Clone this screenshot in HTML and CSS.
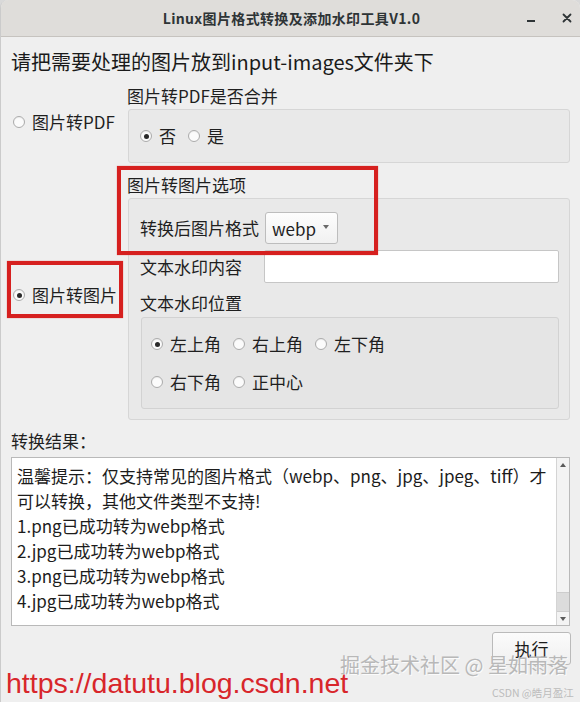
FILE: index.html
```html
<!DOCTYPE html>
<html lang="zh-CN">
<head>
<meta charset="utf-8">
<title>Linux图片格式转换及添加水印工具V1.0</title>
<link rel="stylesheet" href="styles.css">
</head>
<body>
<div class="window">
  <div class="titlebar">
    <div></div>
    <div class="title">Linux图片格式转换及添加水印工具V1.0</div>
    <div class="tb-controls">
      <svg class="tb-min" width="10" height="10" viewBox="0 0 10 10"><rect x="1" y="7" width="8" height="2" fill="#2e3436"/></svg>
      <svg class="tb-close" width="10" height="10" viewBox="0 0 10 10"><path d="M1.5 1.5 L8.5 8.5 M8.5 1.5 L1.5 8.5" stroke="#2e3436" stroke-width="1.8" stroke-linecap="round"/></svg>
    </div>
  </div>

  <div class="content">
    <h1 class="heading">请把需要处理的图片放到input-images文件夹下</h1>

    <div class="modes">
      <div class="mode">
        <label class="radio"><span class="dot"></span>图片转PDF</label>
      </div>
      <div class="section">
        <div class="section-title">图片转PDF是否合并</div>
        <div class="group group-pdf">
          <label class="radio checked"><span class="dot"></span>否</label>
          <label class="radio"><span class="dot"></span>是</label>
        </div>
      </div>

      <div class="mode">
        <label class="radio checked"><span class="dot"></span>图片转图片</label>
      </div>
      <div class="section">
        <div class="section-title">图片转图片选项</div>
        <div class="group group-img">
          <div class="field">
            <span class="field-label">转换后图片格式</span>
            <div class="combo"><span>webp</span><span class="combo-arrow"></span></div>
          </div>
          <div class="field field-gap">
            <span class="field-label">文本水印内容</span>
            <div class="text-input"></div>
          </div>
          <div class="subtitle">文本水印位置</div>
          <div class="group inner">
            <div class="pos-row">
              <label class="radio checked"><span class="dot"></span>左上角</label>
              <label class="radio"><span class="dot"></span>右上角</label>
              <label class="radio"><span class="dot"></span>左下角</label>
            </div>
            <div class="pos-row">
              <label class="radio"><span class="dot"></span>右下角</label>
              <label class="radio"><span class="dot"></span>正中心</label>
            </div>
          </div>
        </div>
      </div>
    </div>

    <div class="result-label">转换结果：</div>
    <div class="textarea">
      <div class="ta-text">
        <div class="ta-line">温馨提示：仅支持常见的图片格式（webp、png、jpg、jpeg、tiff）才</div>
        <div class="ta-line">可以转换，其他文件类型不支持!</div>
        <div class="ta-line">1.png已成功转为webp格式</div>
        <div class="ta-line">2.jpg已成功转为webp格式</div>
        <div class="ta-line">3.png已成功转为webp格式</div>
        <div class="ta-line">4.jpg已成功转为webp格式</div>
      </div>
      <div class="scrollbar">
        <div class="sb-btn"><span class="sb-up"></span></div>
        <div class="sb-track"><div class="sb-thumb"></div></div>
        <div class="sb-btn"><span class="sb-down"></span></div>
      </div>
    </div>
    <div class="actions">
      <button class="btn" type="button">执行</button>
    </div>
  </div>

  <div class="mark mark-options"></div>
  <div class="mark mark-mode"></div>
  <div class="wm-juejin">掘金技术社区 @ 星如雨落</div>
  <div class="wm-url">https://datutu.blog.csdn.net</div>
  <div class="wm-csdn">CSDN @皓月盈江</div>
</div>
</body>
</html>
```

FILE: styles.css
```css
* {
  box-sizing: border-box;
}

html,
body {
  margin: 0;
  padding: 0;
}

body {
  width: 580px;
  height: 702px;
  overflow: hidden;
  background: #d9d9d9;
  font-family: "Noto Sans CJK SC", "Noto Sans", sans-serif;
  color: #1f1f1f;
}

.window {
  position: relative;
  width: 580px;
  height: 702px;
  background: #efefef;
  border-left: 1px solid #cbcbcb;
  border-radius: 8px 8px 0 0;
  overflow: hidden;
}

/* title bar */
.titlebar {
  height: 37px;
  background: #dfddda;
  border-bottom: 1px solid #c6c3bf;
  display: grid;
  grid-template-columns: 1fr auto 1fr;
  align-items: center;
}

.title {
  font-weight: bold;
  font-size: 14px;
  letter-spacing: 0.35px;
  color: #2e3436;
  padding-left: 2px;
}

.tb-controls {
  display: flex;
  justify-content: flex-end;
  align-items: center;
  gap: 26px;
  padding-right: 8px;
}

/* content */
.content {
  padding: 12px 10px 0 10px;
}

.heading {
  margin: 0;
  font-size: 20px;
  line-height: 26px;
  font-weight: normal;
  color: #1a1a1a;
}

.modes {
  display: grid;
  grid-template-columns: 117px 1fr;
  row-gap: 11px;
  margin-top: 10px;
}

.mode {
  display: flex;
  align-items: center;
}

.radio {
  display: flex;
  align-items: center;
  gap: 7px;
  font-size: 17px;
  line-height: 22px;
  white-space: nowrap;
}

.mode .radio {
  padding-left: 2px;
  margin-top: -4px;
}

.dot {
  position: relative;
  width: 12px;
  height: 12px;
  border-radius: 50%;
  border: 1px solid #ababab;
  background: #fbfbfb;
  box-shadow: inset 0 1px 1px rgba(0, 0, 0, 0.06);
  flex: none;
}

.radio.checked .dot::after {
  content: "";
  position: absolute;
  left: 2.5px;
  top: 2.5px;
  width: 5px;
  height: 5px;
  border-radius: 50%;
  background: #2a2a2a;
}

.section-title {
  font-size: 17px;
  line-height: 22px;
  margin-bottom: 2px;
  margin-left: -1px;
}

.group {
  background: #e9e9e9;
  border: 1px solid #d6d6d6;
  border-radius: 3px;
}

.group-pdf {
  height: 54px;
  display: flex;
  align-items: center;
  gap: 12px;
  padding-left: 11px;
}

.group-img {
  display: flex;
  flex-direction: column;
  padding: 13px 10px 10px 11px;
}

.field {
  display: flex;
  align-items: center;
}

.field-gap {
  margin-top: 6px;
}

.field-label {
  width: 125px;
  flex: none;
  font-size: 17px;
  line-height: 22px;
}

.combo {
  width: 73px;
  height: 32px;
  border: 1px solid #bdbdbd;
  border-radius: 3px;
  background: linear-gradient(#fdfdfd, #f1f1f1);
  display: flex;
  align-items: center;
  justify-content: space-between;
  padding: 0 8px 0 6px;
  font-size: 17px;
}

.combo-arrow {
  width: 0;
  height: 0;
  border-left: 3.5px solid transparent;
  border-right: 3.5px solid transparent;
  border-top: 4px solid #6a6a6a;
  margin-top: -3px;
}

.text-input {
  flex: 1;
  height: 33px;
  background: #ffffff;
  border: 1px solid #c6c6c6;
  border-radius: 2px;
  margin-left: -1px;
}

.subtitle {
  margin-top: 9px;
  font-size: 17px;
  line-height: 22px;
}

.inner {
  margin-top: 3px;
  margin-left: 1px;
  background: #e5e5e5;
  border-color: #d2d2d2;
  padding: 15px 9px;
  display: flex;
  flex-direction: column;
  gap: 16px;
}

.pos-row {
  display: flex;
  gap: 12px;
}

/* result */
.result-label {
  margin-top: 10px;
  font-size: 17px;
  line-height: 22px;
}

.textarea {
  margin-top: 5px;
  height: 169px;
  background: #ffffff;
  border: 1px solid #b9b9b9;
  display: flex;
}

.ta-text {
  flex: 1;
  padding: 5px 0 0 5px;
  font-size: 17px;
  line-height: 25px;
  color: #1c1c1c;
  overflow: hidden;
}

.ta-line {
  white-space: nowrap;
}

.scrollbar {
  width: 13px;
  flex: none;
  display: flex;
  flex-direction: column;
  background: #f3f3f3;
  border-left: 1px solid #d4d4d4;
}

.sb-btn {
  height: 13px;
  display: flex;
  align-items: center;
  justify-content: center;
}

.sb-up {
  width: 0;
  height: 0;
  border-left: 3.5px solid transparent;
  border-right: 3.5px solid transparent;
  border-bottom: 4px solid #5a5a5a;
}

.sb-down {
  width: 0;
  height: 0;
  border-left: 3.5px solid transparent;
  border-right: 3.5px solid transparent;
  border-top: 4px solid #5a5a5a;
}

.sb-track {
  flex: 1;
  display: flex;
  flex-direction: column;
  justify-content: flex-end;
}

.sb-thumb {
  height: 20px;
  background: #dcdcdc;
  border-top: 1px solid #cdcdcd;
  border-bottom: 1px solid #cdcdcd;
}

.actions {
  display: flex;
  justify-content: flex-end;
  margin-top: 6px;
  margin-right: -1px;
}

.btn {
  width: 79px;
  height: 33px;
  border: 1px solid #bababa;
  border-radius: 3px;
  background: linear-gradient(#fbfbfb, #f0f0f0);
  font-family: "Noto Sans CJK SC", "Noto Sans", sans-serif;
  font-size: 17px;
  color: #1c1c1c;
  padding: 0;
}

/* annotation overlays */
.mark {
  position: absolute;
  border: 4px solid #d6201f;
  box-shadow: 0 0 1px rgba(214, 32, 31, 0.6);
}

.mark-options {
  left: 116px;
  top: 166px;
  width: 261px;
  height: 89px;
}

.mark-mode {
  left: 6px;
  top: 261px;
  width: 116px;
  height: 57px;
}

.wm-juejin {
  position: absolute;
  left: 339px;
  top: 652px;
  font-size: 20px;
  line-height: 26px;
  color: #b8b8b8;
  text-shadow: 1px 1px 0 rgba(255, 255, 255, 0.8);
  white-space: nowrap;
}

.wm-url {
  position: absolute;
  left: 5px;
  top: 666px;
  font-family: "Liberation Sans", Arial, sans-serif;
  font-size: 28.5px;
  line-height: 34px;
  color: #d8262b;
  white-space: nowrap;
}

.wm-csdn {
  position: absolute;
  left: 491px;
  top: 686px;
  font-size: 10.5px;
  line-height: 14px;
  color: #bcbcbc;
  white-space: nowrap;
}
```
